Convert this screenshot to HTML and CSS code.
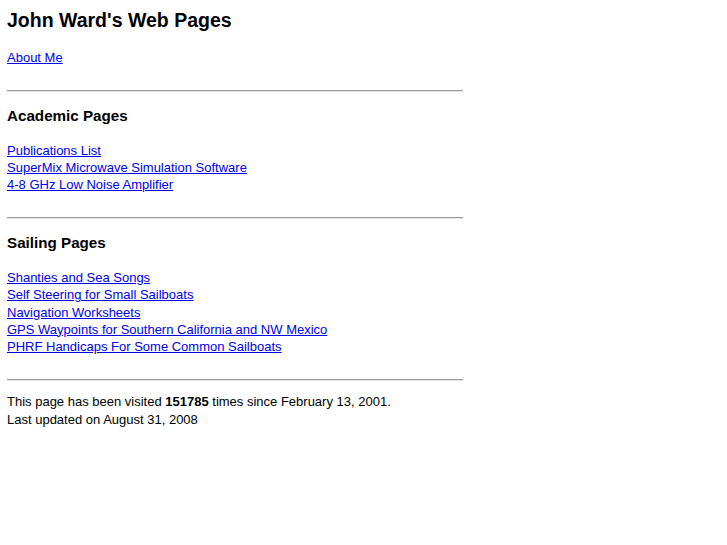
FILE: index.html
```html
<!DOCTYPE html>
<html>
<head>
<meta charset="utf-8">
<title>John Ward's Web Pages</title>
<link rel="stylesheet" href="styles.css">
</head>
<body>
<h2 class="title">John Ward's Web Pages</h2>
<p class="links"><a href="#">About Me</a></p>
<hr class="rule">
<h3 class="section">Academic Pages</h3>
<p class="links">
<a href="#">Publications List</a><br>
<a href="#">SuperMix Microwave Simulation Software</a><br>
<a href="#">4-8 GHz Low Noise Amplifier</a>
</p>
<hr class="rule">
<h3 class="section">Sailing Pages</h3>
<p class="links links-long">
<a href="#">Shanties and Sea Songs</a><br>
<a href="#">Self Steering for Small Sailboats</a><br>
<a href="#">Navigation Worksheets</a><br>
<a href="#">GPS Waypoints for Southern California and NW Mexico</a><br>
<a href="#">PHRF Handicaps For Some Common Sailboats</a>
</p>
<hr class="rule">
<p class="footer">This page has been visited <b>151785</b> times since February 13, 2001.<br>
Last updated on August 31, 2008</p>
</body>
</html>
```
FILE: styles.css
```css
html, body {
  background: #ffffff;
}
body {
  margin: 7px;
  font-family: "Liberation Sans", Arial, sans-serif;
  font-size: 13px;
  color: #000000;
}
a {
  color: #0000ee;
  text-decoration: underline;
}
.title {
  font-size: 19.5px;
  font-weight: bold;
  margin: 2px 0 18px 0;
  line-height: 22px;
}
.section {
  font-size: 15.2px;
  font-weight: bold;
  margin: 15px 0 0 0;
  line-height: 18px;
}
.links {
  margin: 17px 0 14px 0;
  line-height: 17px;
}
.links-long {
  line-height: 17.25px;
}
.rule {
  width: 456px;
  margin: 24px 0 0 0;
  border: 0;
  border-top: 1px solid #9a9a9a;
  border-bottom: 1px solid #e4e4e4;
  height: 0;
}
.footer {
  margin: 12px 0;
  line-height: 18px;
}
```
